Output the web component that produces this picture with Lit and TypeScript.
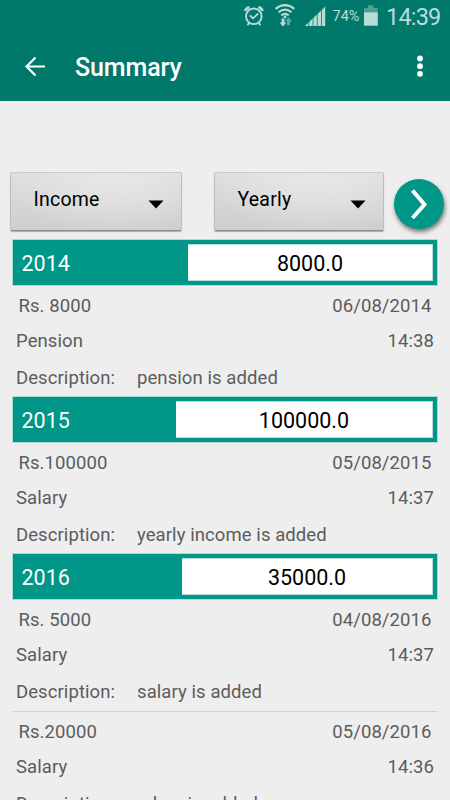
import { LitElement, html, css, svg } from "lit";
import { customElement, property } from "lit/decorators.js";

interface Entry {
  amount: string;
  date: string;
  category: string;
  time: string;
  note: string;
  tight?: boolean;
}
interface Period {
  year: string;
  total: string;
  width: number;
  entries: Entry[];
}

const PERIODS: Period[] = [
  { year: "2014", total: "8000.0", width: 245, entries: [
    { amount: "Rs. 8000", date: "06/08/2014", category: "Pension", time: "14:38", note: "pension is added" },
  ] },
  { year: "2015", total: "100000.0", width: 257, entries: [
    { amount: "Rs.100000", date: "05/08/2015", category: "Salary", time: "14:37", note: "yearly income is added" },
  ] },
  { year: "2016", total: "35000.0", width: 251, entries: [
    { amount: "Rs. 5000", date: "04/08/2016", category: "Salary", time: "14:37", note: "salary is added" },
    { amount: "Rs.20000", date: "05/08/2016", category: "Salary", time: "14:36", note: "salary is added", tight: true },
  ] },
];

@customElement("status-bar")
class StatusBar extends LitElement {
  static styles = css`
    :host { display: flex; height: 33px; color: #b9dcd7; }
    svg { display: block; flex: none; }
    .icons { margin-left: 240px; }
    .pct { width: 29px; margin-left: 2.5px; font-size: 14.5px; line-height: 34px; white-space: nowrap; }
    .cell { margin-left: 0; }
    .clock { margin-left: 7.5px; font-size: 23.5px; line-height: 35px; letter-spacing: -0.8px; white-space: nowrap; }
  `;
  render() {
    const bars = [0, 1, 2, 3, 4];
    return html`
      <svg class="icons" width="90" height="33" viewBox="240 0 90 33" fill="none" stroke="currentColor">
        <circle cx="253.8" cy="16.3" r="7.8" stroke-width="1.9" />
        <path d="M245.2 11Q246 8 249.5 7.3M258.3 7.3Q261.8 8 262.6 11" stroke-width="2.6" />
        <path d="M249.8 15.3 253 18.3 258.3 13.5" stroke-width="1.7" />
        <path d="M249 22.8 247.5 25.4M258.8 22.8 260.3 25.4" stroke-width="1.8" />
        <path d="M275.6 8.8Q285 1.6 294.4 8.8M278.5 12.2Q285 7 291.5 12.2M281.3 15.4Q285 12.3 288.7 15.4" stroke-width="2.1" />
        <circle cx="285" cy="17" r="1.4" fill="currentColor" stroke="none" />
        <path d="M281.6 18.5h2.8v4h2l-3.4 4-3.4-4h2z" fill="currentColor" stroke="none" />
        <path d="M287 25.3v-4h-2l3.5-4 3.5 4h-2v4z" fill="#5fa99f" stroke="none" />
        ${bars.map((i) => svg`<path d="M${305 + i * 4.2} 26V${26 - i * 4}L${308.4 + i * 4.2} ${26 - i * 4 - 3.5}V26z" fill="currentColor" stroke="none" />`)}
      </svg>
      <span class="pct">74%</span>
      <svg class="cell" width="17" height="33" viewBox="362 0 17 33">
        <path d="M368 5.3h5.5V8h4.3v4.5H364V8h4z" fill="#4b9f94" />
        <path d="M364 12.3h13.8V25.7H364z" fill="currentColor" />
      </svg>
      <span class="clock">14:39</span>`;
  }
}

@customElement("spinner-button")
class SpinnerButton extends LitElement {
  @property() label = "";
  static styles = css`
    :host {
      display: flex; box-sizing: border-box; height: 59px; justify-content: space-between;
      padding: 0 17px 0 23px; border: 1px solid #bdbdbd; border-bottom-color: #8c8c8c; border-radius: 2px;
      border-top-color: #c9c9c9; background: radial-gradient(ellipse at 60% 0, #e8e8e8, transparent 75%), linear-gradient(#dedede, #cfcfcf);
      box-shadow: 0 1px 1px #aaa; color: #000; font-size: 19.5px; line-height: 54px; letter-spacing: 0.2px;
    }
    svg { display: block; margin-top: 27px; }
  `;
  render() {
    return html`<span>${this.label}</span>
      <svg width="16" height="9" viewBox="0 0 16 9"><path d="M.5.5h15L8 8.5z" fill="#000" /></svg>`;
  }
}

@customElement("entry-item")
class EntryItem extends LitElement {
  @property({ attribute: false }) entry!: Entry;
  static styles = css`
    :host { display: block; height: 112px; color: #5c5c5c; font-size: 18.5px; letter-spacing: 0.08px; line-height: 22px; white-space: nowrap; }
    .row { display: flex; justify-content: space-between; }
    .top { padding: 10px 5.5px 0 6px; }
    .mid { padding: 13px 3px 0 3.5px; }
    .desc { justify-content: flex-start; padding: 15px 0 0 3.5px; }
    .label { width: 121px; }
    .tight { width: 117px; }
  `;
  render() {
    const e = this.entry;
    return html`
      <div class="row top"><span>${e.amount}</span><span>${e.date}</span></div>
      <div class="row mid"><span>${e.category}</span><span>${e.time}</span></div>
      <div class="row desc"><span class="label ${e.tight ? "tight" : ""}">Description:</span><span>${e.note}</span></div>`;
  }
}

@customElement("app-root")
class AppRoot extends LitElement {
  static styles = css`
    :host { display: block; height: 800px; overflow: hidden; background: #eeeeee; font-family: Roboto, sans-serif; }
    .head { height: 101px; background: #00796b; }
    .bar { display: flex; align-items: center; height: 68px; color: #fff; }
    .back { margin-left: 24px; }
    h1 { margin: 0 0 0 29px; font-size: 25px; font-weight: 500; line-height: 68px; padding-top: 1px; letter-spacing: -0.1px; }
    .more { margin-left: auto; margin-right: 24px; }
    svg { display: block; }
    .filters { display: flex; align-items: flex-start; padding: 71px 6.5px 0 9.5px; height: 68px; }
    .kind { width: 172px; }
    .range { width: 170px; margin-left: 32px; }
    .go {
      display: block; width: 50px; height: 50px; margin: 6.7px 0 0 10px; padding: 0; border: 0; border-radius: 50%;
      background: #009688; box-shadow: 1px 3px 4px rgba(0, 0, 0, 0.5);
    }
    .list { padding: 0 13px; }
    .period {
      display: flex; align-items: center; justify-content: space-between; box-sizing: border-box; height: 45px;
      padding: 0 4px 0 8.5px; background: #009688; color: #fff; font-size: 21.5px;
      box-shadow: 0 0 0 1px rgba(0, 150, 136, 0.25);
    }
    .year { padding-top: 2px; }
    .total {
      box-sizing: border-box; height: 37px; line-height: 37px; background: #fff; color: #000; text-align: center;
      border: solid #b5dedb; border-width: 1px 1px 1px 0;
    }
    entry-item { margin: 0 0 0 -0.5px; }
    .rule { height: 1px; margin-bottom: -1px; background: #d0d0d0; }
  `;
  render() {
    return html`
      <header class="head">
        <status-bar></status-bar>
        <div class="bar">
          <svg class="back" width="22" height="22" viewBox="0 0 22 22" fill="none" stroke="#fff" stroke-width="2.2">
            <path d="M21 10.5H3M11.5 1.5 2.5 10.5l9 9" />
          </svg>
          <h1>Summary</h1>
          <svg class="more" width="12" height="24" viewBox="0 0 12 24" fill="#fff">
            <circle cx="6" cy="3.5" r="2.9" /><circle cx="6" cy="11.2" r="2.9" /><circle cx="6" cy="18.8" r="2.9" />
          </svg>
        </div>
      </header>
      <div class="filters">
        <spinner-button class="kind" label="Income"></spinner-button>
        <spinner-button class="range" label="Yearly"></spinner-button>
        <button class="go" aria-label="Go">
          <svg width="50" height="50" viewBox="0 0 50 50" fill="none" stroke="#fff" stroke-width="4">
            <path d="M18.5 11.5 30.5 25.5 18.5 39" />
          </svg>
        </button>
      </div>
      <main class="list">
        ${PERIODS.map((p) => html`
          <div class="period"><span class="year">${p.year}</span><div class="total" style="width:${p.width}px">${p.total}</div></div>
          ${p.entries.map((e, i) => html`${i ? html`<div class="rule"></div>` : ""}<entry-item .entry=${e}></entry-item>`)}
        `)}
      </main>`;
  }
}
